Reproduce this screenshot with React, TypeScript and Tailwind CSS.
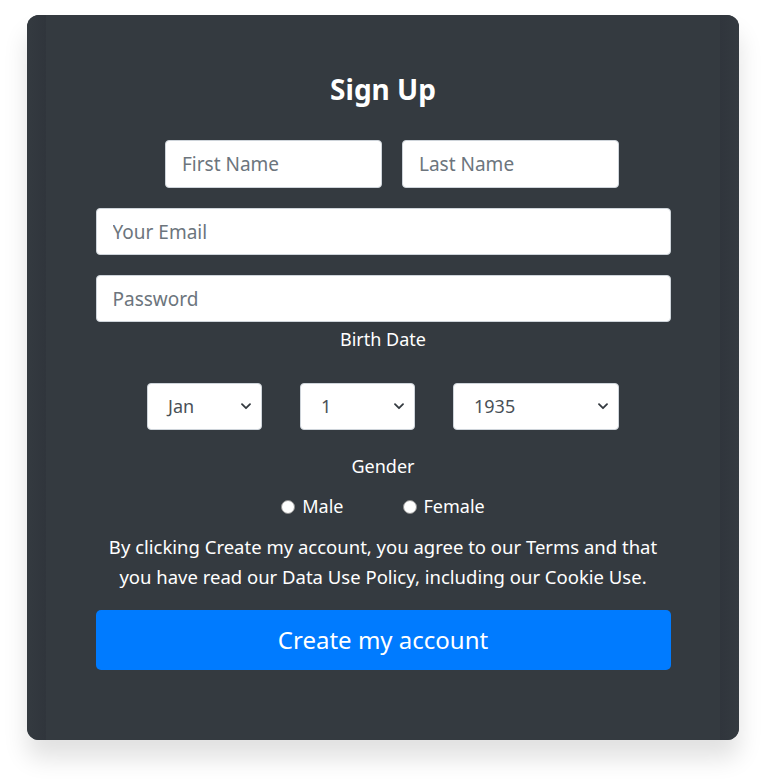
import React from "react";

const Chevron = () => (
  <svg width="10" height="7" viewBox="0 0 10 7" className="shrink-0">
    <path d="M1 1.2 L5 5.2 L9 1.2" fill="none" stroke="#343a40" strokeWidth="1.8" strokeLinecap="round" strokeLinejoin="round" />
  </svg>
);

const Select = ({ value, w }: { value: string; w: string }) => (
  <div className={`${w} h-[47px] bg-white rounded-[4px] border border-[#ced4da] flex items-center justify-between pl-[20px] pr-[10px] text-[18px] text-[#495057]`}>
    <span>{value}</span>
    <Chevron />
  </div>
);

const Radio = ({ label }: { label: string }) => (
  <label className="flex items-center gap-[7px]">
    <span className="w-[14px] h-[14px] rounded-full bg-white border border-[#8f8f8f] inline-block" />
    <span>{label}</span>
  </label>
);

export default function App() {
  return (
    <div
      className="min-h-screen bg-white pt-[15px] pl-[27px]"
      style={{ fontFamily: '"Noto Sans", "Open Sans", sans-serif' }}
    >
      <div className="w-[712px] h-[725px] rounded-[12px] bg-[#343a40] shadow-[0_18px_24px_rgba(0,0,0,0.12)] relative overflow-hidden">
        <div className="absolute inset-y-0 left-0 w-[19px] bg-gradient-to-r from-[#343a40] to-[#30353c] pointer-events-none" />
        <div className="absolute inset-y-0 right-0 w-[19px] bg-gradient-to-l from-[#343a40] to-[#30353c] pointer-events-none" />
        <div className="relative px-[69px] pt-[57px] flex flex-col items-center text-white">
          <h1 className="text-[28px] font-bold leading-[34px]">Sign Up</h1>
          <div className="mt-[34px] flex gap-[20px] pl-[18px]">
            <input
              placeholder="First Name"
              className="w-[217px] h-[48px] rounded-[4px] bg-white border border-[#ced4da] px-[16px] text-[19px] text-[#495057] placeholder:text-[#6c757d] outline-none"
            />
            <input
              placeholder="Last Name"
              className="w-[217px] h-[48px] rounded-[4px] bg-white border border-[#ced4da] px-[16px] text-[19px] text-[#495057] placeholder:text-[#6c757d] outline-none"
            />
          </div>
          <input
            placeholder="Your Email"
            className="mt-[20px] w-[575px] h-[47px] rounded-[4px] bg-white border border-[#ced4da] px-[16px] text-[19px] text-[#495057] placeholder:text-[#6c757d] outline-none"
          />
          <input
            placeholder="Password"
            className="mt-[20px] w-[575px] h-[47px] rounded-[4px] bg-white border border-[#ced4da] px-[16px] text-[19px] text-[#495057] placeholder:text-[#6c757d] outline-none"
          />
          <div className="mt-[4px] text-[18px] leading-[27px]">Birth Date</div>
          <div className="mt-[30px] flex gap-[38px]">
            <Select value="Jan" w="w-[115px]" />
            <Select value="1" w="w-[115px]" />
            <Select value="1935" w="w-[166px]" />
          </div>
          <div className="mt-[23px] text-[18px] leading-[27px]">Gender</div>
          <div className="mt-[13px] flex gap-[59px] text-[18px] leading-[27px]">
            <Radio label="Male" />
            <Radio label="Female" />
          </div>
          <p className="mt-[12px] text-[18.5px] leading-[30px] text-center w-[565px]">
            By clicking Create my account, you agree to our Terms and that you have read our Data Use Policy, including our Cookie Use.
          </p>
          <button className="mt-[18px] w-[575px] h-[60px] rounded-[5px] bg-[#007bff] text-white text-[24px]">
            Create my account
          </button>
        </div>
      </div>
    </div>
  );
}
